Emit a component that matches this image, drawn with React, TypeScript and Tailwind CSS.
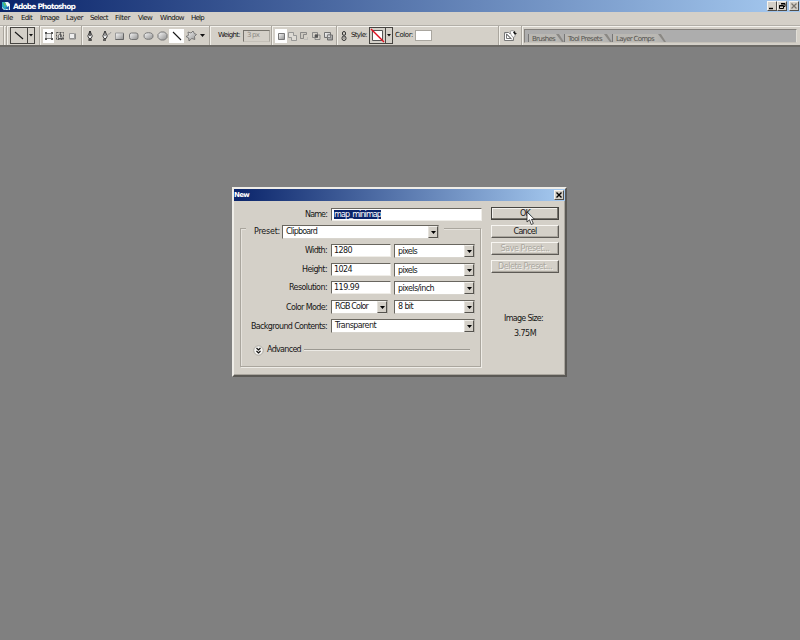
import React, { useLayoutEffect, useRef } from "react";

/** Text run spread evenly over a fixed width, like the bitmap UI font. */
function Fit({ w, children, className = "" }: { w: number; children: string; className?: string }) {
  const outer = useRef<HTMLSpanElement>(null);
  const inner = useRef<HTMLSpanElement>(null);
  useLayoutEffect(() => {
    const o = outer.current!;
    const i = inner.current!;
    i.style.letterSpacing = "0px";
    const natural = i.getBoundingClientRect().width;
    i.style.letterSpacing = `${(w - natural) / children.length}px`;
    o.style.width = `${w}px`;
  }, [w, children]);
  return (
    <span ref={outer} className={`inline-block shrink-0 whitespace-nowrap ${className}`}>
      <span ref={inner}>{children}</span>
    </span>
  );
}

const menus: [string, number, string][] = [
  ["File", 10, "w-[18px]"],
  ["Edit", 11, "w-[19px]"],
  ["Image", 19, "w-[26px]"],
  ["Layer", 17, "w-[24px]"],
  ["Select", 18, "w-[25px]"],
  ["Filter", 15, "w-[23px]"],
  ["View", 14, "w-[22px]"],
  ["Window", 24, "w-[31px]"],
  ["Help", 13, "w-[20px]"],
];

function Sep({ className = "" }: { className?: string }) {
  return <div className={`h-[19px] w-[2px] shrink-0 border-l border-[#aaa69e] bg-[#f2f0ea] ${className}`} />;
}

function WinButton({ children, className = "" }: { children: React.ReactNode; className?: string }) {
  return (
    <div className={`h-[10px] w-[10px] shrink-0 border border-t-[#f5f3ef] border-l-[#f5f3ef] border-r-[#504e4a] border-b-[#504e4a] bg-[#d4d0c8] ${className}`}>
      <svg width="8" height="8" viewBox="0 0 8 8" fill="none" stroke="#000" className="block">
        {children}
      </svg>
    </div>
  );
}

function Input({ children, className = "" }: { children?: React.ReactNode; className?: string }) {
  return (
    <div className={`flex h-[13px] shrink-0 items-center border border-t-[#69665f] border-l-[#69665f] border-r-[#efede8] border-b-[#efede8] bg-white pl-[2px] ${className}`}>
      {children}
    </div>
  );
}

function Select({ children, className = "" }: { children: React.ReactNode; className?: string }) {
  return (
    <div className={`flex h-[14px] shrink-0 items-center justify-between border border-t-[#69665f] border-l-[#69665f] border-r-[#b5b1a9] border-b-[#d8d5ce] bg-white pl-[3px] ${className}`}>
      {children}
      <div className="flex h-[12px] w-[10px] items-center justify-center border border-t-[#f0eee9] border-l-[#e5e2dc] border-r-[#55534e] border-b-[#55534e] bg-[#d4d0c8]">
        <svg width="5" height="3" viewBox="0 0 5 3"><path d="M0 0h5L2.500 3z" fill="#000" /></svg>
      </div>
    </div>
  );
}

function Row({ label, w, children, className = "", labelClass = "" }: { label: string; w: number; children: React.ReactNode; className?: string; labelClass?: string }) {
  return (
    <div className={`flex items-center ${className}`}>
      <div className={`mr-[4px] flex w-[86px] justify-end ${labelClass}`}><Fit w={w}>{label}</Fit></div>
      {children}
    </div>
  );
}

function Button({ label, w, kind = "normal", className = "" }: { label: string; w: number; kind?: "normal" | "default" | "disabled"; className?: string }) {
  const frame =
    kind === "default"
      ? "border border-[#45433f] shadow-[inset_-1px_-1px_0_#77746d,inset_1px_1px_0_#f3f1ed]"
      : "border border-t-[#f7f5f1] border-l-[#f7f5f1] border-r-[#5d5a55] border-b-[#5d5a55] shadow-[inset_-1px_-1px_0_#aaa69e]";
  const text = kind === "disabled" ? "text-[#aaa79f] [text-shadow:1px_1px_0_#f3f1ed]" : "text-[#161616]";
  return (
    <div className={`flex h-[13px] w-[68px] items-center justify-center bg-[#d4d0c8] ${frame} ${text} ${className}`}>
      <Fit w={w}>{label}</Fit>
    </div>
  );
}

function Defs() {
  return (
    <defs>
      <linearGradient id="shade" x1="0" y1="0" x2="1" y2="1">
        <stop offset="0" stopColor="#fafafa" />
        <stop offset="1" stopColor="#8e8e8e" />
      </linearGradient>
    </defs>
  );
}

function Icon({ children, className = "" }: { children: React.ReactNode; className?: string }) {
  return (
    <svg width="14" height="14" viewBox="0 0 14 14" fill="none" stroke="#555" className={`block shrink-0 ${className}`}>
      {children}
    </svg>
  );
}

function Arrow({ className = "" }: { className?: string }) {
  return <svg width="5" height="3" viewBox="0 0 5 3" className={`shrink-0 ${className}`}><path d="M0 0h5L2.5 3z" fill="#111" /></svg>;
}

function Toolbar() {
  return (
    <div className="flex h-[22px] items-center border-t border-b-[2px] border-t-[#b2afa8] border-b-[#6c6a66] bg-[#d4d0c8] text-[7px] leading-[9px] shadow-[inset_0_1px_0_#f4f2ed]">
      <Sep className="ml-[3px]" />
      <Sep className="ml-[1px]" />
      <div className="ml-[2px] flex h-[17px] w-[25px] shrink-0 border border-[#474541]">
        <div className="flex w-[17px] items-center justify-center border-r border-[#474541]">
          <svg width="10" height="10" viewBox="0 0 10 10"><path d="M1 1l8 7" stroke="#161616" strokeWidth="1.1" /></svg>
        </div>
        <div className="flex flex-1 items-center justify-center"><svg width="4" height="3" viewBox="0 0 4 3"><path d="M0 0h4L2 2.6z" fill="#111" /></svg></div>
      </div>
      <Sep className="ml-[4px]" />
      <Icon className="ml-[2px] bg-[linear-gradient(90deg,#fff_0_11px,transparent_11px)]">
        <Defs />
        <path d="M3 4.500h5.500v5H3z" fill="#eee" stroke="#888" />
        <path d="M2 3h2v2H2zM8 3h2v2H8zM2 9h2v2H2zM8 9h2v2H8z" fill="#555" stroke="none" />
      </Icon>
      <Icon className="-ml-[3px]">
        <path d="M2.500 3.500h7v7h-7z" strokeDasharray="2 1" />
        <path d="M4.500 9.500c-1-2 0-4 2-5l2 5zM6.500 4.500v4M4 9.500h5" fill="#ddd" strokeWidth=".9" />
      </Icon>
      <Icon className="-ml-[2px]"><path d="M3.500 4.500h5v5h-5z" fill="#eee" stroke="#999" /><path d="M3.500 10h6V4.500" stroke="#888" /></Icon>
      <Sep className="ml-[1px]" />
      <Icon>
        <path d="M7 2L4.800 7l1.100 2.500h2.200L9.300 7z" fill="#eee" stroke="#333" strokeWidth=".9" />
        <path d="M7 2v5M5.400 11h3.400" stroke="#222" strokeWidth="1.300" />
      </Icon>
      <Icon className="ml-[1px]">
        <path d="M7 2L4.800 7l1.100 2.500h2.200L9.300 7zM7 2v5" fill="#eee" stroke="#333" strokeWidth=".9" />
        <path d="M5 11h3" stroke="#222" strokeWidth="1.300" />
        <path d="M10 6c1-3 1 1 3-3" stroke="#888" strokeWidth=".8" />
      </Icon>
      <Icon><path d="M3.500 4h8v6.500h-8z" fill="url(#shade)" stroke="#999" /><path d="M3.500 10.500h8V4.500" stroke="#666" /></Icon>
      <Icon className="ml-[1px]"><rect x="2.500" y="4" width="8.500" height="6.500" rx="2" fill="url(#shade)" stroke="#777" /></Icon>
      <Icon><ellipse cx="7.500" cy="7" rx="4.500" ry="3.300" fill="url(#shade)" stroke="#777" /></Icon>
      <Icon><path d="M5.500 3h4L12 5.500v3L9.500 11h-4L3 8.500v-3z" fill="url(#shade)" stroke="#777" /></Icon>
      <div className="flex h-[14px] w-[15px] shrink-0 items-center justify-center bg-white">
        <svg width="10" height="10" viewBox="0 0 10 10"><path d="M1 1l8 8" stroke="#161616" strokeWidth="1.100" /></svg>
      </div>
      <Icon><path d="M4 3l3 1 2-2 1.300 2.500 2.200 1-2 2 .3 3-3-1L5 12l-.3-3L2 7.500l2.500-1.200z" fill="url(#shade)" stroke="#666" strokeWidth=".8" /></Icon>
      <Arrow className="ml-[2px]" />
      <Sep className="ml-[4px]" />
      <Fit w={22} className="ml-[7px]">Weight:</Fit>
      <div className="ml-[3px] flex h-[12px] w-[27px] shrink-0 items-center border border-t-[#77746d] border-l-[#77746d] border-r-[#a9a69e] border-b-[#c4c0b8] bg-[#d4d0c8] pl-[3px] text-[#8d8a84]">
        <Fit w={12}>3 px</Fit>
      </div>
      <Sep className="ml-[1px]" />
      <Icon className="ml-[2px] bg-[linear-gradient(90deg,#fff_0_12px,transparent_12px)]"><path d="M3.500 4.500h6v6h-6z" fill="url(#shade)" stroke="#777" /></Icon>
      <Icon className="-ml-[3px]"><path d="M2.500 3.500h5v3h3v5h-5v-3h-3z" fill="#dedbd5" stroke="#888" strokeWidth=".8" /></Icon>
      <Icon className="-ml-[2px]"><path d="M2.500 3.500h6v2h-3v4h-3z" fill="#ccc8c0" stroke="#777" strokeWidth=".8" /><path d="M6.500 10.500h3v-3" stroke="#aaa" strokeDasharray="1 1" /></Icon>
      <Icon className="-ml-[2px]"><path d="M2.500 3.500h5v5h-5zM5 6h5v4.500H5z" stroke="#777" strokeWidth=".8" /><path d="M5 5.500h3v3H5z" fill="#555" stroke="none" /></Icon>
      <Icon className="-ml-[2px]"><path d="M2.500 3.500h6v5h-6zM5.500 6h5v5h-5z" fill="url(#shade)" stroke="#666" strokeWidth=".9" /><path d="M5.500 6h3v2.500h-3z" fill="#ddd" stroke="#777" strokeWidth=".8" /></Icon>
      <Sep />
      <svg width="8" height="12" viewBox="0 0 8 12" fill="none" stroke="#333" className="ml-[2px] shrink-0"><rect x="2.500" y="1.500" width="3" height="4" rx="1.500" /><rect x="2" y="6" width="4" height="4.500" rx="2" /><path d="M4 4v5" stroke="#777" /></svg>
      <Fit w={16} className="ml-[3px]">Style:</Fit>
      <div className="ml-[2px] flex h-[17px] w-[24px] shrink-0 border border-[#474541]">
        <div className="flex w-[16px] items-center justify-center border-r border-[#474541]">
          <svg width="15" height="15" viewBox="0 0 15 15"><path d="M2.500 2.500h10v10h-10z" fill="#fff" stroke="#555" /><path d="M1 1l13 13" stroke="#e01020" strokeWidth="1.400" /></svg>
        </div>
        <div className="flex flex-1 items-center justify-center"><svg width="4" height="3" viewBox="0 0 4 3"><path d="M0 0h4L2 2.600z" fill="#111" /></svg></div>
      </div>
      <Fit w={18} className="ml-[2px]">Color:</Fit>
      <div className="ml-[2px] h-[11px] w-[17px] shrink-0 border border-[#a9a69f] bg-white" />
      <Sep className="ml-auto" />
      <svg width="15" height="14" viewBox="0 0 15 14" className="ml-[3px] shrink-0" fill="none">
        <path d="M1.500 3.500h4l1 1h4v7h-9z" fill="#fff" stroke="#777" />
        <path d="M3.500 5v4.500H8zM3 4.500l6 6" stroke="#666" strokeWidth=".9" />
        <path d="M7 2.500l2-1 3 1v5l-2 1-2-3z" fill="#fff" stroke="#888" strokeWidth=".8" />
        <path d="M10 3.500l1.500-1.500 1 2 1.500.5-2 1.200z" fill="#111" />
      </svg>
      <Sep className="ml-[3px]" />
      <div className="mr-[3px] ml-[1px] flex h-[14px] w-[273px] shrink-0 items-end border border-t-[#85827d] border-l-[#85827d] border-r-[#e2dfd8] border-b-[#c5c1b9] bg-[#adadad] pl-[3px] text-[#55534f]">
        <Tab label="Brushes" w={23} className="w-[36px]" />
        <Tab label="Tool Presets" w={34} className="w-[48px]" />
        <Tab label="Layer Comps" w={38} className="w-[54px]" />
      </div>
    </div>
  );
}

function Tab({ label, w, className }: { label: string; w: number; className: string }) {
  return (
    <div className={`flex h-[8px] shrink-0 items-center border-l border-[#777] bg-[linear-gradient(90deg,#bab8b3_80%,transparent)] pl-[3px] ${className}`}>
      <Fit w={w} className="pt-[3px]">{label}</Fit>
      <svg width="8" height="8" viewBox="0 0 8 8" className="ml-auto shrink-0"><path d="M0 0h3l5 8H6z" fill="#8a8884" /></svg>
    </div>
  );
}

function Dialog() {
  return (
    <div className="relative flex h-[190px] w-[335px] flex-col border-2 border-t-[#efede8] border-l-[#efede8] border-r-[#5b5955] border-b-[#5b5955] bg-[#d4d0c8] text-[8px] leading-[10px] text-[#161616] shadow-[inset_-1px_-1px_0_#a9a59d]">
      <div className="flex h-[12px] shrink-0 items-center bg-linear-to-r/srgb from-[#0a246a] to-[#a6caf0] pr-[1px] text-[7px] font-bold text-white">
        <Fit w={15}>New</Fit>
        <WinButton className="ml-auto"><path d="M1.500 1.500l5 5M6.500 1.500l-5 5" strokeWidth="1.400" /></WinButton>
      </div>
      <div className="flex pl-[6px]">
        <div className="w-[242px] pt-[7px]">
          <Row label="Name:" w={22} className="pl-[1px]">
            <Input className="w-[151px]"><Fit w={47} className="h-[9px] bg-[#0a246a] leading-[9px] text-white">map_minimap</Fit></Input>
          </Row>
          <div className="mt-[7px] h-[139px] w-[241px] border border-[#aaa69e] shadow-[1px_1px_0_#eeece7,inset_1px_1px_0_#e5e2dc]">
            <div className="-mt-[5px] ml-[5px] flex w-[198px] items-center bg-[#d4d0c8] pt-[1px] pl-[8px]">
              <Fit w={26} className="mr-[2px]">Preset:</Fit>
              <Select className="w-[157px]"><Fit w={31}>Clipboard</Fit></Select>
            </div>
            <Row label="Width:" w={22} className="mt-[5px]">
              <Input className="mb-[1px] w-[60px]"><Fit w={18}>1280</Fit></Input>
              <Select className="ml-[3px] w-[81px]"><Fit w={19} className="pt-[1px]">pixels</Fit></Select>
            </Row>
            <Row label="Height:" w={25} className="mt-[5px]">
              <Input className="mb-[1px] w-[60px]"><Fit w={18}>1024</Fit></Input>
              <Select className="ml-[3px] w-[81px]"><Fit w={19} className="pt-[1px]">pixels</Fit></Select>
            </Row>
            <Row label="Resolution:" w={38} className="mt-[4px]">
              <Input className="mb-[1px] w-[60px]"><Fit w={25}>119.99</Fit></Input>
              <Select className="ml-[3px] w-[81px]"><Fit w={36} className="pt-[1px]">pixels/inch</Fit></Select>
            </Row>
            <Row label="Color Mode:" w={41} className="mt-[5px]" labelClass="pt-[2px]">
              <Select className="w-[57px]"><Fit w={33}>RGB Color</Fit></Select>
              <Select className="ml-[6px] w-[81px]"><Fit w={15}>8 bit</Fit></Select>
            </Row>
            <Row label="Background Contents:" w={76} className="mt-[5px]" labelClass="pt-[2px]">
              <Select className="w-[144px]"><Fit w={41}>Transparent</Fit></Select>
            </Row>
            <div className="mt-[11px] flex h-[12px] items-center pl-[12px]">
              <svg width="11" height="11" viewBox="0 0 11 11" fill="none"><circle cx="5.500" cy="5.500" r="4.700" fill="#f4f3f0" stroke="#a19e97" strokeWidth=".8" /><path d="M3.500 3l2 2 2-2M3.500 6l2 2 2-2" stroke="#111" strokeWidth="1.200" /></svg>
              <Fit w={34} className="ml-[3px]">Advanced</Fit>
              <div className="ml-[3px] h-[2px] w-[166px] border-t border-[#9c9992] bg-[#eceae5]" />
            </div>
          </div>
        </div>
        <div className="ml-[9px] flex w-[68px] flex-col items-center pt-[6px]">
          <Button label="OK" w={10} kind="default" />
          <Button label="Cancel" w={23} className="mt-[5px]" />
          <Button label="Save Preset..." w={49} kind="disabled" className="mt-[4px]" />
          <Button label="Delete Preset..." w={54} kind="disabled" className="mt-[5px]" />
          <Fit w={39} className="mt-[41px] mr-[3px]">Image Size:</Fit>
          <Fit w={22} className="mt-[5px]">3.75M</Fit>
        </div>
      </div>
      <svg width="9" height="15" viewBox="0 0 9 15" className="absolute top-[22px] left-[292px]">
        <path d="M1 1v10l2.500-2.200L5.300 13.500l2-1L5.500 8.300H8.500z" fill="#fff" stroke="#222" strokeWidth=".8" />
      </svg>
    </div>
  );
}

export default function App() {
  return (
    <div className="flex h-[640px] w-[800px] flex-col overflow-hidden bg-[#808080] font-['DejaVu_Sans',sans-serif] text-[#111]">
      <div className="flex h-[12px] shrink-0 items-center bg-linear-to-r/srgb from-[#0a246a] to-[#a6caf0] pr-[1px] pl-[1px]">
        <svg width="10" height="10" viewBox="0 0 10 10"><path d="M1 1h6l2 2v6H3L1 7z" fill="#e9f5f7" /><path d="M1 1h3l3 6-3 2-3-3z" fill="#28a9c5" /><path d="M2 1l3 2-1 3z" fill="#69bf55" /><path d="M5 2l3 1-1 4z" fill="#fff" /><path d="M4 7l4-2v4z" fill="#2463ae" /></svg>
        <Fit w={62} className="ml-[2px] pt-[1px] text-[7.5px] leading-[10px] font-bold text-white">Adobe Photoshop</Fit>
        <WinButton className="ml-auto"><path d="M1 6.500h4" strokeWidth="1.400" /></WinButton>
        <WinButton><path d="M3 1.500h4v3H5.500M1.500 3.500h4v3h-4zM3 2h4M1 4h4" /></WinButton>
        <WinButton className="ml-[2px]"><path d="M1.500 1.500l5 5M6.500 1.500l-5 5" stroke="#77736c" strokeWidth="1.200" /></WinButton>
      </div>
      <div className="flex h-[13px] shrink-0 items-center bg-[#d4d0c8] pl-[3px] text-[7px] leading-[9px]">
        {menus.map(([label, w, cell]) => (
          <div key={label} className={`shrink-0 ${cell}`}><Fit w={w}>{label}</Fit></div>
        ))}
      </div>
      <Toolbar />
      <div className="pt-[140px] pl-[232px]">
        <Dialog />
      </div>
    </div>
  );
}
